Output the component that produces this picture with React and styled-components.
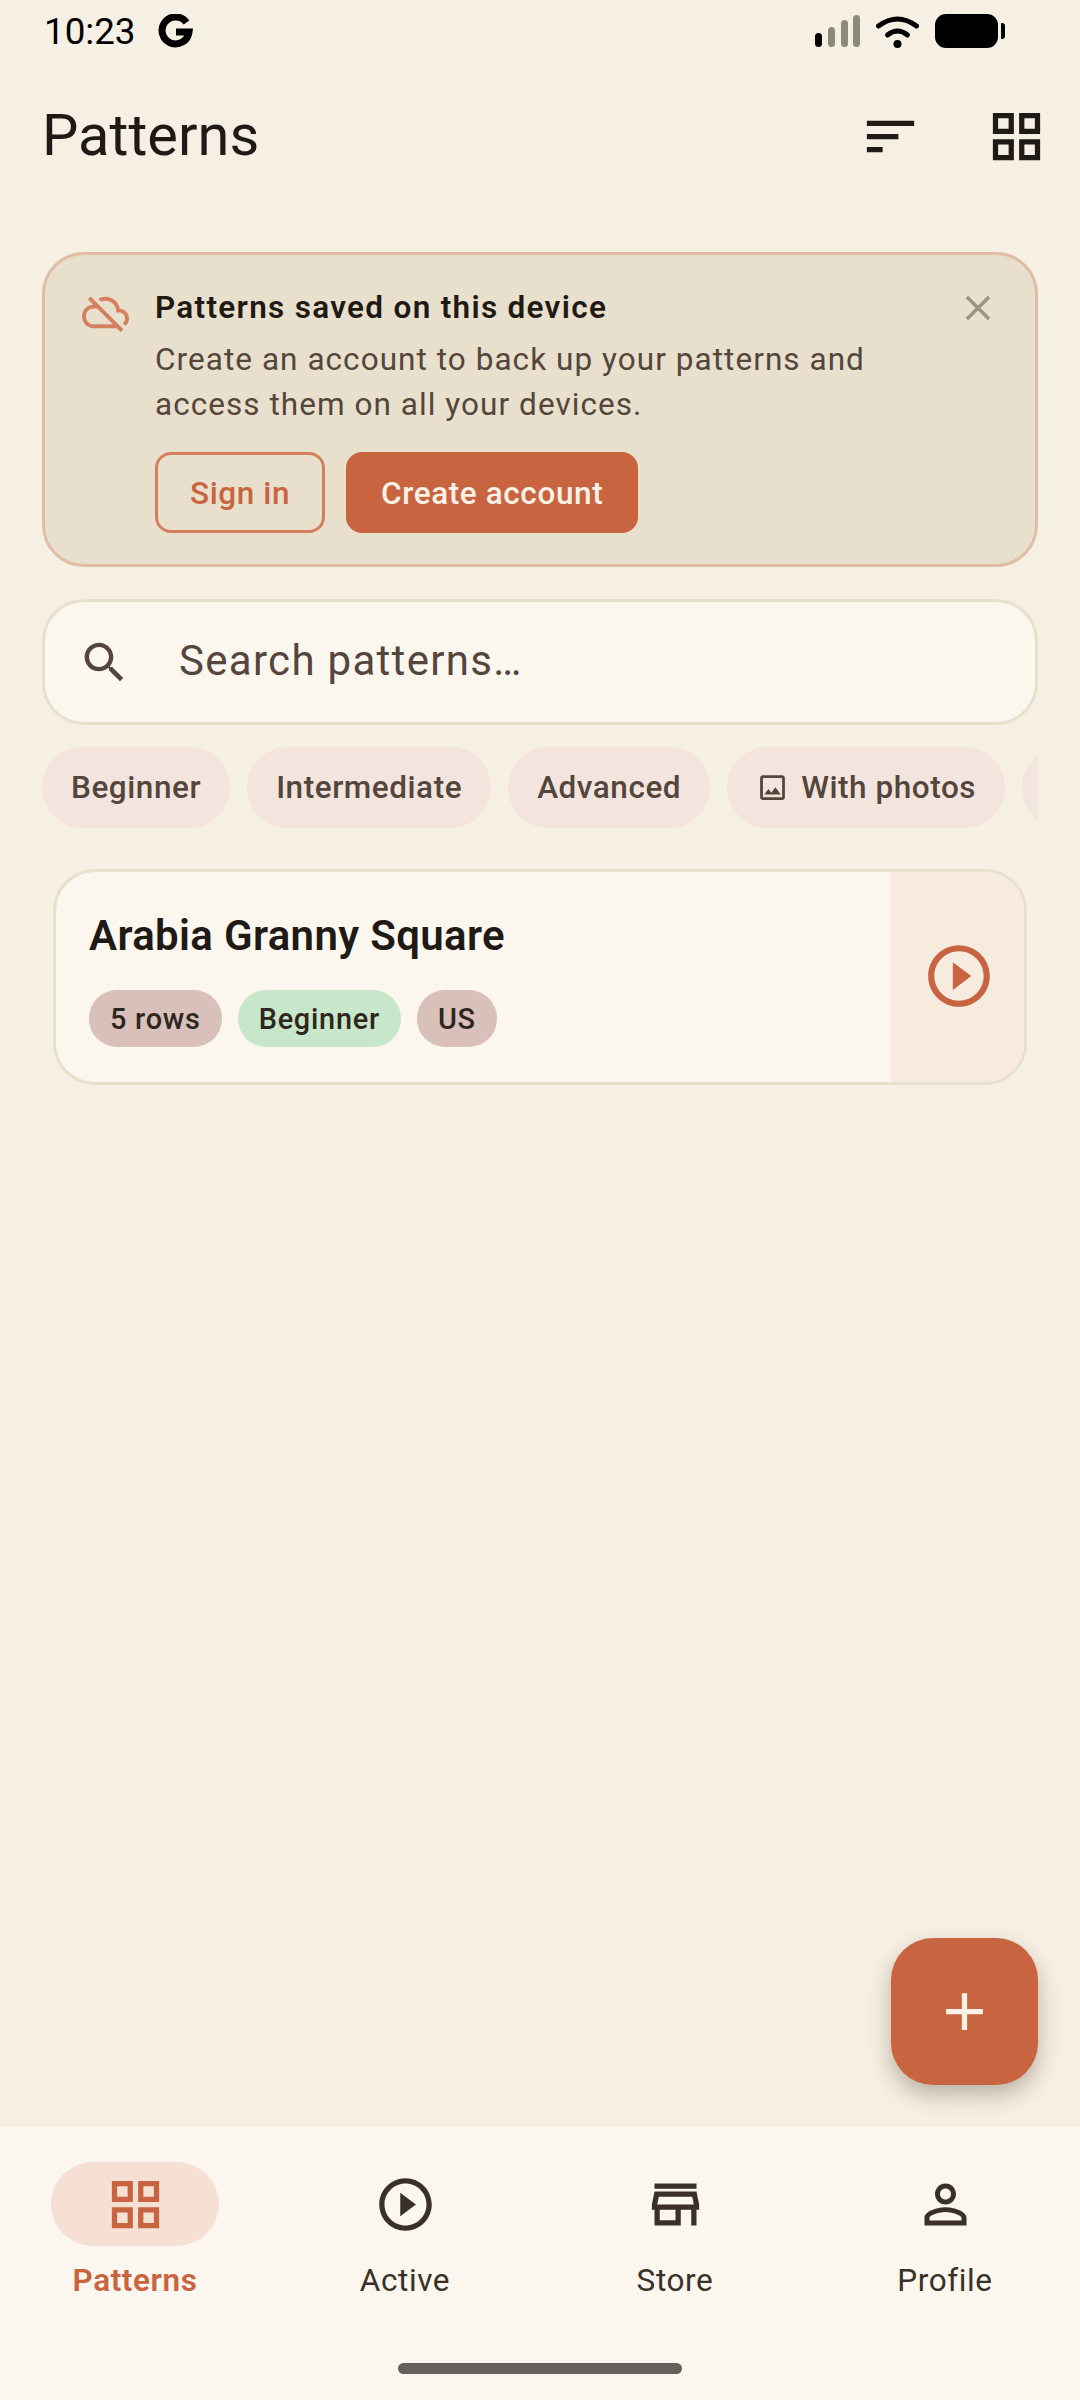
import React from 'react'
import styled, { createGlobalStyle } from 'styled-components'

const GlobalStyle = createGlobalStyle`
  * { box-sizing: border-box; }
  html, body { margin: 0; padding: 0; background: #f6efe3; }
  body { font-family: Roboto, "Noto Sans", sans-serif; }
`

const ICONS = {
  sort: 'M3 18h6v-2H3v2zM3 6v2h18V6H3zm0 7h12v-2H3v2z',
  grid: 'M3 3v8h8V3H3zm6 6H5V5h4v4zm-6 4v8h8v-8H3zm6 6H5v-4h4v4zm4-16v8h8V3h-8zm6 6h-4V5h4v4zm-6 4v8h8v-8h-8zm6 6h-4v-4h4v4z',
  search: 'M15.5 14h-.79l-.28-.27C15.41 12.59 16 11.11 16 9.5 16 5.91 13.09 3 9.5 3S3 5.91 3 9.5 5.91 16 9.5 16c1.61 0 3.09-.59 4.23-1.57l.27.28v.79l5 4.99L20.49 19l-4.99-5zm-6 0C7.01 14 5 11.99 5 9.5S7.01 5 9.5 5 14 7.01 14 9.5 11.99 14 9.5 14z',
  close: 'M19 6.41L17.59 5 12 10.59 6.41 5 5 6.41 10.59 12 5 17.59 6.41 19 12 13.41 17.59 19 19 17.59 13.41 12z',
  add: 'M19 13h-6v6h-2v-6H5v-2h6V5h2v6h6v2z',
  play: 'M10 16.5l6-4.5-6-4.5v9zM12 2C6.48 2 2 6.48 2 12s4.48 10 10 10 10-4.48 10-10S17.52 2 12 2zm0 18c-4.41 0-8-3.59-8-8s3.59-8 8-8 8 3.59 8 8-3.59 8-8 8z',
  person: 'M12 5.9c1.16 0 2.1.94 2.1 2.1s-.94 2.1-2.1 2.1S9.9 9.16 9.9 8s.94-2.1 2.1-2.1m0 9c2.97 0 6.1 1.46 6.1 2.1v1.1H5.9V17c0-.64 3.13-2.1 6.1-2.1M12 4C9.79 4 8 5.79 8 8s1.79 4 4 4 4-1.79 4-4-1.79-4-4-4zm0 9c-2.67 0-8 1.34-8 4v3h16v-3c0-2.66-5.33-4-8-4z',
  store: 'M18.36 9l.6 3H5.04l.6-3h12.72M20 4H4v2h16V4zm0 3H4l-1 5v2h1v6h10v-6h4v6h2v-6h1v-2l-1-5zM6 18v-4h6v4H6z',
  cloudOff: 'M24 15c0-2.64-2.05-4.78-4.65-4.96C18.67 6.59 15.64 4 12 4c-1.33 0-2.57.36-3.65.97l1.49 1.49C10.51 6.17 11.24 6 12 6c3.04 0 5.5 2.46 5.5 5.5v.5H19c1.66 0 3 1.34 3 3 0 .99-.48 1.85-1.21 2.4l1.41 1.41c1.09-.92 1.8-2.27 1.8-3.81zM4.41 3.86L3 5.27l2.77 2.77h-.42C2.34 8.36 0 10.91 0 14c0 3.31 2.69 6 6 6h11.73l2 2 1.41-1.41L4.41 3.86zM6 18c-2.21 0-4-1.79-4-4s1.79-4 4-4h1.73l8 8H6z',
  image: 'M19 5v14H5V5h14m0-2H5c-1.1 0-2 .9-2 2v14c0 1.1.9 2 2 2h14c1.1 0 2-.9 2-2V5c0-1.1-.9-2-2-2zm-4.86 8.86l-3 3.87L9 13.14 6 17h12l-3.86-5.14z',
}

const Icon = ({ name, size, color }) => (
  <svg width={size} height={size} viewBox="0 0 24 24" fill={color} style={{ display: 'block', flex: 'none' }}>
    <path d={ICONS[name]} />
  </svg>
)

const GoogleMark = () => (
  <svg width="35" height="34" viewBox="0 0 35 34" fill="none" stroke="#000" strokeWidth="7">
    <path d="M28.5 8.5 A13.5 13.5 0 1 0 31 18 H18" />
  </svg>
)

const SignalIcon = () => (
  <svg width="45" height="32" viewBox="0 0 45 32">
    <rect x="0" y="18" width="7" height="14" rx="3.5" fill="#000" />
    <rect x="13" y="12" width="7" height="20" rx="3.5" fill="#8b887e" />
    <rect x="26" y="5" width="7" height="27" rx="3.5" fill="#8b887e" />
    <rect x="38" y="0" width="7" height="32" rx="3.5" fill="#8b887e" />
  </svg>
)

const WifiIcon = () => (
  <svg width="43" height="33" viewBox="0 0 43 33" fill="none" stroke="#000" strokeWidth="5" strokeLinecap="round">
    <path d="M2.5 11 Q21.5 -3 40.500 11" />
    <path d="M11.500 20 Q21.500 12 31.500 20" />
    <circle cx="21.500" cy="29" r="4" fill="#000" stroke="none" />
  </svg>
)

const BatteryIcon = () => (
  <svg width="70" height="34" viewBox="0 0 70 34">
    <rect x="0" y="0" width="63" height="34" rx="11" fill="#000" />
    <path d="M66 9 h1 a3 3 0 0 1 3 3 v10 a3 3 0 0 1 -3 3 h-1 z" fill="#000" />
  </svg>
)

const App = () => {
  return (
    <Screen>
      <GlobalStyle />
      <StatusBar>
        <StatusLeft>
          <Clock>10:23</Clock>
          <GoogleMark />
        </StatusLeft>
        <StatusRight>
          <SignalIcon />
          <WifiIcon />
          <BatteryIcon />
        </StatusRight>
      </StatusBar>

      <Header>
        <Title>Patterns</Title>
        <HeaderActions>
          <IconButton><Icon name="sort" size={63} color="#1f1a15" /></IconButton>
          <IconButton><Icon name="grid" size={63} color="#1f1a15" /></IconButton>
        </HeaderActions>
      </Header>

      <Content>
        <Banner>
          <BannerIcon><Icon name="cloudOff" size={47} color="#d4805f" /></BannerIcon>
          <BannerBody>
            <BannerTitle>Patterns saved on this device</BannerTitle>
            <BannerText>Create an account to back up your patterns and access them on all your devices.</BannerText>
            <BannerButtons>
              <OutlineButton>Sign in</OutlineButton>
              <FilledButton>Create account</FilledButton>
            </BannerButtons>
          </BannerBody>
          <CloseButton><Icon name="close" size={42} color="#9a9485" /></CloseButton>
        </Banner>

        <SearchBox>
          <Icon name="search" size={53} color="#54453d" />
          <Placeholder>Search patterns…</Placeholder>
        </SearchBox>

        <Chips>
          <Chip>Beginner</Chip>
          <Chip>Intermediate</Chip>
          <Chip>Advanced</Chip>
          <Chip $withIcon><Icon name="image" size={33} color="#54453d" />With photos</Chip>
          <Chip />
        </Chips>

        <PatternCard>
          <CardMain>
            <CardTitle>Arabia Granny Square</CardTitle>
            <Tags>
              <Tag>5 rows</Tag>
              <Tag $green>Beginner</Tag>
              <Tag>US</Tag>
            </Tags>
          </CardMain>
          <CardAction><Icon name="play" size={74} color="#c8643f" /></CardAction>
        </PatternCard>
      </Content>

      <Fab><Icon name="add" size={63} color="#fbf1e6" /></Fab>

      <BottomNav>
        <NavItems>
          <NavItem>
            <NavPill $active><Icon name="grid" size={63} color="#c8643f" /></NavPill>
            <NavLabel $active>Patterns</NavLabel>
          </NavItem>
          <NavItem>
            <NavPill><Icon name="play" size={63} color="#3a3027" /></NavPill>
            <NavLabel>Active</NavLabel>
          </NavItem>
          <NavItem>
            <NavPill><Icon name="store" size={63} color="#3a3027" /></NavPill>
            <NavLabel>Store</NavLabel>
          </NavItem>
          <NavItem>
            <NavPill><Icon name="person" size={63} color="#3a3027" /></NavPill>
            <NavLabel>Profile</NavLabel>
          </NavItem>
        </NavItems>
        <HomeBar />
      </BottomNav>
    </Screen>
  )
}

const Screen = styled.div`
  position: relative;
  display: flex;
  flex-direction: column;
  width: 1080px;
  height: 2400px;
  overflow: hidden;
  background: #f6efe3;
`
const StatusBar = styled.div`
  display: flex;
  align-items: center;
  justify-content: space-between;
  height: 62px;
  padding: 0 75px 0 44px;
`
const StatusLeft = styled.div`
  display: flex;
  align-items: center;
  gap: 22px;
`
const Clock = styled.span`
  font-size: 36.75px;
  color: #000;
`
const StatusRight = styled.div`
  display: flex;
  align-items: center;
  gap: 16px;
`
const Header = styled.header`
  display: flex;
  align-items: center;
  justify-content: space-between;
  height: 148px;
  padding-left: 42px;
`
const Title = styled.h1`
  margin: 0 0 3px;
  font-size: 57.75px;
  font-weight: 400;
  color: #1f1a15;
`
const HeaderActions = styled.div`
  display: flex;
  padding-right: 1px;
`
const IconButton = styled.div`
  display: flex;
  align-items: center;
  justify-content: center;
  width: 126px;
  height: 126px;
`
const Content = styled.main`
  display: flex;
  flex: 1;
  flex-direction: column;
  padding: 42px 42px 0;
`
const Banner = styled.section`
  display: flex;
  height: 315px;
  padding: 32px 0 0 37px;
  background: #e8e0cc;
  border: 3px solid #e0bda5;
  border-radius: 42px;
`
const BannerIcon = styled.div`
  flex: none;
  width: 73px;
  padding-top: 2px;
`
const BannerBody = styled.div`
  flex: 1;
  min-width: 0;
`
const BannerTitle = styled.div`
  font-size: 31.5px;
  font-weight: 600;
  line-height: 42px;
  letter-spacing: 1.3px;
  color: #1f1a15;
`
const BannerText = styled.p`
  margin: 8px 0 0;
  width: 730px;
  font-size: 31.5px;
  line-height: 45px;
  letter-spacing: 1.05px;
  color: #54453d;
`
const BannerButtons = styled.div`
  display: flex;
  gap: 21px;
  margin-top: 25px;
`
const OutlineButton = styled.div`
  display: flex;
  align-items: center;
  height: 81px;
  padding: 2px 32px 0;
  font-size: 31.5px;
  font-weight: 500;
  letter-spacing: 0.6px;
  color: #c8643f;
  border: 3px solid #d4805f;
  border-radius: 16px;
`
const FilledButton = styled(OutlineButton)`
  color: #fbf1e6;
  background: #c8643f;
  border-color: #c8643f;
`
const CloseButton = styled.div`
  flex: none;
  width: 78px;
`
const SearchBox = styled.div`
  display: flex;
  align-items: center;
  gap: 48px;
  height: 126px;
  margin-top: 32px;
  padding: 0 33px;
  background: #fbf7ef;
  border: 3px solid #e8e0cc;
  border-radius: 42px;
`
const Placeholder = styled.span`
  margin-bottom: 3px;
  font-size: 42px;
  letter-spacing: 1.3px;
  color: #54453d;
`
const Chips = styled.div`
  display: flex;
  gap: 17px;
  height: 81px;
  margin-top: 22px;
  overflow: hidden;
`
const Chip = styled.div`
  display: flex;
  flex: none;
  align-items: center;
  gap: 12px;
  min-width: 100px;
  height: 81px;
  padding: 0 29px;
  font-size: 31.5px;
  font-weight: 500;
  letter-spacing: 0.55px;
  color: #54453d;
  background: #f3e5de;
  border-radius: 40px;
`
const PatternCard = styled.article`
  display: flex;
  height: 216px;
  margin: 41px 11px 0;
  overflow: hidden;
  background: #fbf7ef;
  border: 3px solid #e8e0cc;
  border-radius: 42px;
`
const CardMain = styled.div`
  flex: 1;
  padding: 39px 33px 0;
`
const CardTitle = styled.h2`
  margin: 0;
  font-size: 42px;
  font-weight: 600;
  line-height: 50px;
  letter-spacing: 0.35px;
  color: #1f1a15;
`
const Tags = styled.div`
  display: flex;
  gap: 16px;
  margin-top: 29px;
`
const Tag = styled.div`
  display: flex;
  align-items: center;
  height: 57px;
  padding: 0 21px;
  font-size: 28.9px;
  font-weight: 500;
  letter-spacing: 0.75px;
  color: #2e2720;
  background: ${(p) => (p.$green ? '#c8e6c9' : '#d9c0bb')};
  border-radius: 28px;
`
const CardAction = styled.div`
  display: flex;
  flex: none;
  align-items: center;
  justify-content: center;
  width: 133px;
  padding: 0 0 2px 2px;
  background: #f7ebdf;
`
const Fab = styled.div`
  position: absolute;
  top: 1938px;
  right: 42px;
  display: flex;
  align-items: center;
  justify-content: center;
  width: 147px;
  height: 147px;
  background: #c8643f;
  border-radius: 42px;
  box-shadow: 0 10px 22px rgba(60, 50, 35, 0.32);
`
const BottomNav = styled.nav`
  flex: none;
  height: 273px;
  background: #fbf7ef;
`
const NavItems = styled.div`
  display: grid;
  grid-template-columns: repeat(4, 270px);
  padding-top: 35px;
`
const NavItem = styled.div`
  display: flex;
  flex-direction: column;
  align-items: center;
`
const NavPill = styled.div`
  display: flex;
  align-items: center;
  justify-content: center;
  width: 168px;
  height: 84px;
  background: ${(p) => (p.$active ? '#f5e0d3' : 'transparent')};
  border-radius: 42px;
`
const NavLabel = styled.span`
  margin-top: 14px;
  font-size: 31.5px;
  font-weight: ${(p) => (p.$active ? 600 : 400)};
  line-height: 42px;
  letter-spacing: 0.6px;
  color: ${(p) => (p.$active ? '#c8643f' : '#3a3027')};
`
const HomeBar = styled.div`
  width: 284px;
  height: 11px;
  margin: 61px auto 0;
  background: #63625d;
  border-radius: 6px;
`

export default App
